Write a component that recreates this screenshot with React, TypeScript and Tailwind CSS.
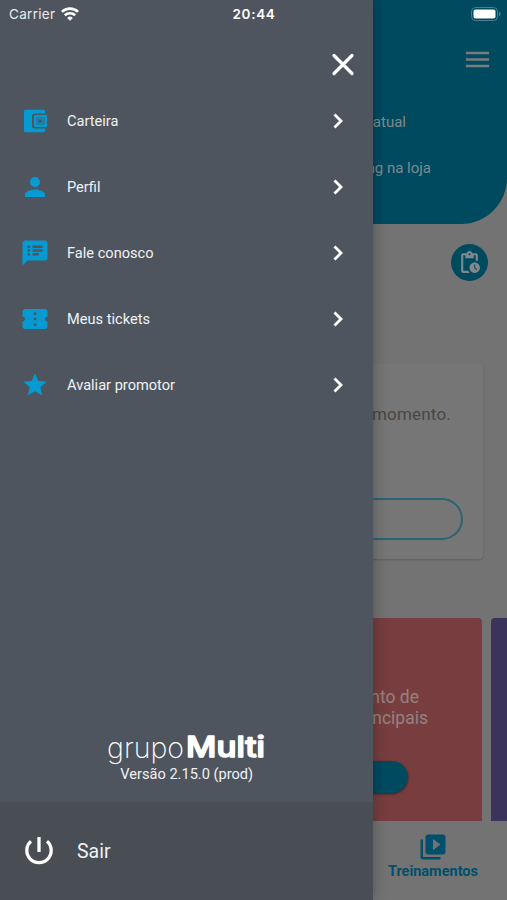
import type { ReactNode } from "react";
import {
  MdConfirmationNumber,
  MdMenu,
  MdPendingActions,
  MdPerson,
  MdSpeakerNotes,
  MdStar,
  MdVideoLibrary,
} from "react-icons/md";

interface MenuItem {
  label: string;
  icon: ReactNode;
}

function WalletIcon() {
  return (
    <svg viewBox="0 0 24 24" className="h-6 w-6" fill="currentColor">
      <path d="M2.500.7h17.500a2.300 2.300 0 0 1 2.300 2.300v1.500H11.500A2.500 2.500 0 0 0 9 7v10a2.500 2.500 0 0 0 2.500 2.500h10.800V21a2.300 2.300 0 0 1-2.300 2.300H2.500A1.500 1.500 0 0 1 1 21.800V2.200A1.500 1.500 0 0 1 2.500.7z" />
      <path
        fillRule="evenodd"
        d="M12.500 6H24v12H12.500a1.500 1.500 0 0 1-1.500-1.500v-9A1.500 1.500 0 0 1 12.500 6zm.5 2v8h9V8z"
      />
      <path d="M13 8h9v8h-9z" opacity=".6" />
      <circle cx="17" cy="12" r="1.600" fill="#2b5a72" />
    </svg>
  );
}

function PowerIcon() {
  return (
    <svg viewBox="0 0 30 30" className="h-[30px] w-[30px]" fill="none" stroke="#fff" strokeWidth="3.300">
      <path d="M7 5.300a12.200 12.200 0 1 0 16 0" />
      <path d="M15 1v15" />
    </svg>
  );
}

const menuItems: MenuItem[] = [
  { label: "Carteira", icon: <WalletIcon /> },
  { label: "Perfil", icon: <MdPerson size={30} /> },
  { label: "Fale conosco", icon: <MdSpeakerNotes size={30} /> },
  { label: "Meus tickets", icon: <MdConfirmationNumber size={30} /> },
  { label: "Avaliar promotor", icon: <MdStar size={28} /> },
];

function StatusBar() {
  return (
    <div className="absolute inset-x-0 top-0 z-20 flex h-7 items-center justify-between pl-[9px] pr-[6px] font-['Inter',sans-serif] text-white">
      <div className="flex w-40 items-center gap-[6px] text-[13.500px] tracking-[0.3px] text-[#e9ebee]">
        Carrier
        <svg viewBox="0 0 18 14" className="h-[14px] w-[18px]" fill="none" stroke="#fff" strokeWidth="2.600">
          <path d="M.9 4.900a11.700 11.700 0 0 1 16.200 0" />
          <path d="M3.800 8.300a7.500 7.500 0 0 1 10.400 0" />
          <path d="M9 13.700 6.200 10.900a4 4 0 0 1 5.600 0z" fill="#fff" stroke="none" />
        </svg>
      </div>
      <span className="pr-[2px] text-[13.500px] font-semibold tracking-[0.7px]">20:44</span>
      <div className="flex w-40 justify-end">
        <svg viewBox="0 0 30 14" className="h-[14px] w-[30px]">
          <rect x=".5" y=".5" width="26" height="13" rx="4" fill="none" stroke="#4d7e90" />
          <rect x="2.500" y="2.500" width="22" height="9" rx="2" fill="#fff" />
          <path d="M28 4.800c2.200.7 2.200 3.700 0 4.400z" fill="#4d7e90" />
        </svg>
      </div>
    </div>
  );
}

// Tela inicial, escurecida atrás do menu
function HomeScreen() {
  return (
    <div className="flex h-full flex-col bg-[#737373]">
      <header className="flex h-[224px] shrink-0 flex-col rounded-br-[46px] bg-[#004a60] text-[#7d8a8e]">
        <div className="flex justify-end pr-[14px] pt-[44px]">
          <MdMenu size={31} className="text-[#777b7c]" />
        </div>
        <p className="mt-[37px] pr-[101px] text-right text-[15px] leading-[20px]">atual</p>
        <p className="mt-[26px] pr-[76px] text-right text-[15px] leading-[20px]">ng na loja</p>
      </header>

      <div className="mt-5 flex justify-end pr-[19.5px]">
        <div className="flex h-[37px] w-[37px] items-center justify-center rounded-full bg-[#004a60]">
          <MdPendingActions size={25} className="text-[#83898b]" />
        </div>
      </div>

      <section className="ml-6 mr-[24px] mt-[83px] flex h-[195px] shrink-0 flex-col rounded bg-[#767676] shadow-[0_1px_2px_rgba(0,0,0,0.2)]">
        <p className="mt-10 pr-[32px] text-right text-[17px] leading-5 tracking-[0.2px] text-[#474747]">momento.</p>
        <div className="ml-5 mr-5 mt-[74px] h-[42px] rounded-full border-2 border-[#2a6474]" />
      </section>

      <section className="mt-[59px] flex h-[203px] shrink-0 gap-[9px]">
        <article className="ml-6 flex w-[458px] flex-col rounded-t bg-[#783e3f]">
          <p className="mt-[69px] pr-[54px] text-right text-[17.500px] leading-[21px] text-[#938380]">
            <span className="block pr-[9px]">nto de</span>
            <span className="block">ncipais</span>
          </p>
          <div className="mr-[74px] mt-[32px] h-8 w-40 self-end rounded-full bg-[#004a60] shadow-[0_1px_3px_rgba(0,0,0,0.5)]" />
        </article>
        <article className="flex-1 rounded-tl bg-[#3c335c]" />
      </section>

      <nav className="flex flex-1 justify-end bg-[#737373] text-[#00506b]">
        <div className="mr-[29px] flex flex-col items-center pt-[11px]">
          <MdVideoLibrary size={30} />
          <span className="text-[14.500px] font-bold leading-5">Treinamentos</span>
        </div>
      </nav>
    </div>
  );
}

function Drawer() {
  return (
    <aside className="absolute inset-y-0 left-0 z-10 flex w-[372.5px] flex-col bg-[#4e555f] text-[#f0f2f5] shadow-[0_0_14px_rgba(0,0,0,0.3)]">
      <div className="flex h-[88px] items-end justify-end pb-[12px] pr-[17.5px]">
        <svg viewBox="0 0 24 24" className="h-6 w-6" stroke="#fff" strokeWidth="3.200" strokeLinecap="round">
          <path d="M3 3.500l18 18M21 3.500 3 21.500" />
        </svg>
      </div>

      <ul className="flex flex-col">
        {menuItems.map((item) => (
          <li key={item.label} className="flex h-[66px] items-center pl-5 pr-[26.5px]">
            <span className="flex w-[30px] justify-center text-[#059bd2]">{item.icon}</span>
            <span className="ml-[17px] flex-1 pt-px text-[14.600px] font-[450]">{item.label}</span>
            <svg viewBox="0 0 16 16" className="h-4 w-4" fill="none" stroke="#fff" strokeWidth="2.800">
              <path d="M4.500 1.500 11 8l-6.500 6.500" />
            </svg>
          </li>
        ))}
      </ul>

      <div className="mt-auto flex flex-col items-center pb-[19px] pl-[1px]">
        <svg viewBox="0 0 162 34" className="h-[34px] w-[162px]" fill="#fff">
          <text x="1" y="26.500" fontFamily="Inter, sans-serif" fontWeight="200" fontSize="28" textLength="77" lengthAdjust="spacingAndGlyphs">
            grupo
          </text>
          <text
            x="80"
            y="25.500"
            fontFamily="Inter, sans-serif"
            fontWeight="500"
            fontSize="28"
            textLength="79"
            lengthAdjust="spacingAndGlyphs"
            stroke="#fff"
            strokeWidth="1.500"
            strokeLinejoin="round"
          >
            Multi
          </text>
        </svg>
        <p className="text-[14.600px] font-[450] leading-[18px]">Versão 2.15.0 (prod)</p>
      </div>

      <footer className="flex h-[98px] shrink-0 items-center bg-[#494d54] pl-[24px]">
        <PowerIcon />
        <span className="ml-[23px] pt-px text-[19.500px] font-[450]">Sair</span>
      </footer>
    </aside>
  );
}

export default function App() {
  return (
    <div className="relative h-screen w-full overflow-hidden font-['Roboto',sans-serif]">
      <StatusBar />
      <HomeScreen />
      <Drawer />
    </div>
  );
}
